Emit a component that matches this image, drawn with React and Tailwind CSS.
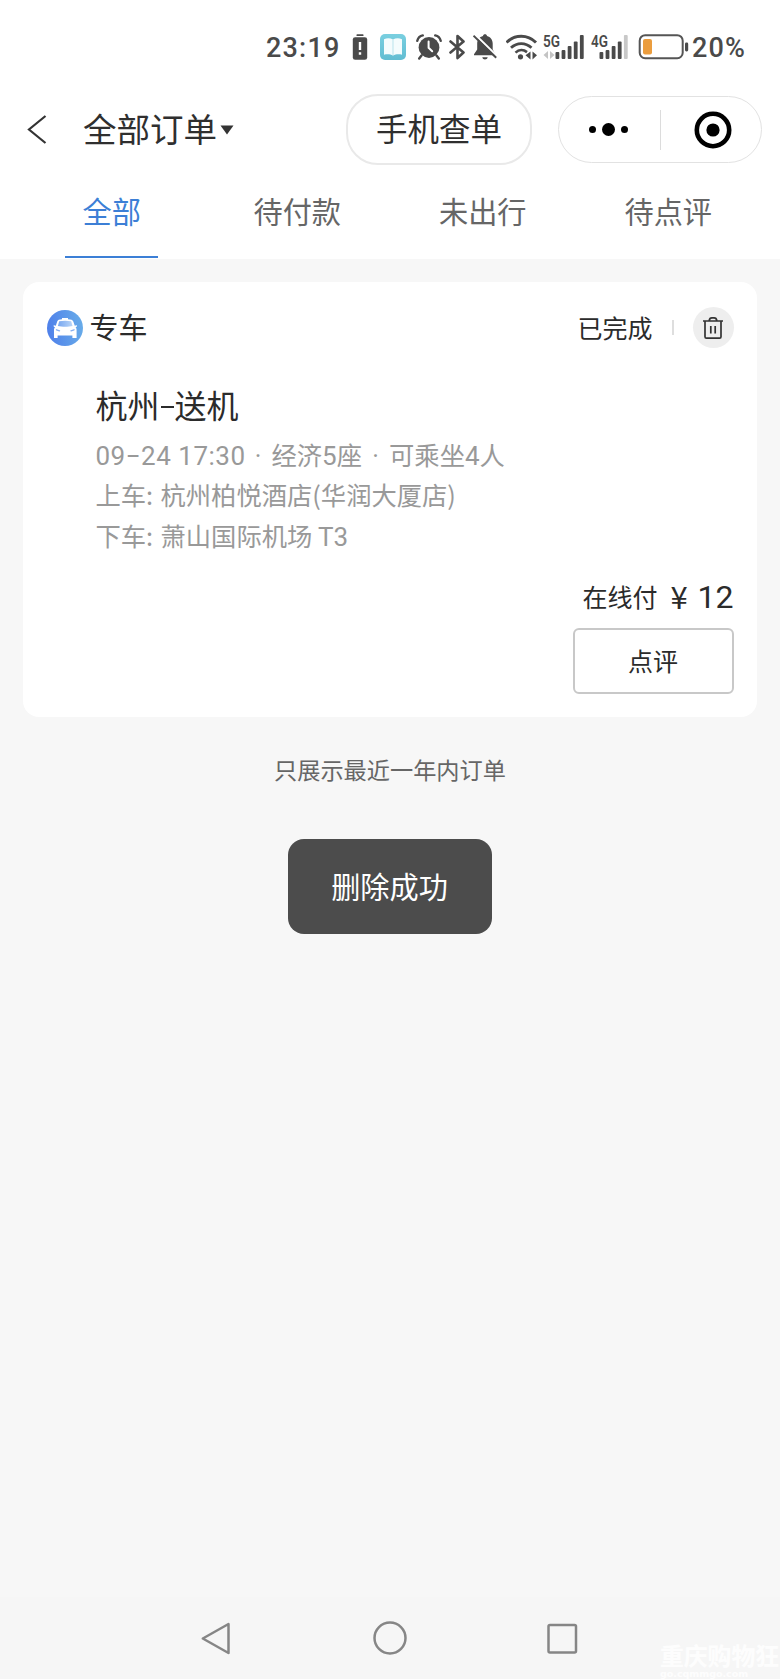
import React, { useState } from "react";

const tabs = ["全部", "待付款", "未出行", "待点评"];

const order = {
  type: "专车",
  status: "已完成",
  title: ["杭州", "送机"],
  from: "杭州柏悦酒店(华润大厦店)",
  price: 12,
};

const SignalBars = ({ label, bars, x, weak }) => (
  <svg className="overflow-visible" width="42" height="26" viewBox="0 0 42 26">
    <text
      x="0"
      y="13"
      fontFamily="Roboto"
      fontWeight="600"
      fontSize="16.5"
      textLength="17"
      lengthAdjust="spacingAndGlyphs"
      fill="#4a4a4a"
    >
      {label}
    </text>
    {weak && (
      <g fill="#c4c4c4">
        <path d="M5 17v8l-4.500-4zM7 17v8l4.500-4z" />
      </g>
    )}
    {[18, 16, 12, 7.5, 1].map((top, i) => (
      <rect
        key={top}
        x={x + i * 6.1}
        y={top}
        width="3.8"
        height={25 - top}
        rx="1"
        fill={i < bars ? "#4a4a4a" : "#c8c8c8"}
      />
    ))}
  </svg>
);

const StatusBar = () => (
  <div className="flex h-[94px] items-start pt-[34px] pl-[266px] text-[#4a4a4a]">
    <span className="w-[86px] pt-px font-[Roboto] text-[27px] leading-[27px] font-medium tracking-[1.200px]">
      23:19
    </span>
    {/* battery warning */}
    <svg className="mr-3" width="16" height="26" viewBox="0 0 16 26">
      <rect x="4.5" y="0.3" width="7" height="1.8" rx="0.6" fill="#4a4a4a" />
      <rect x="0.8" y="3.2" width="14.4" height="22.6" rx="2.4" fill="#4a4a4a" />
      <path d="M8 8v8M8 18.200v2.600" stroke="#fff" strokeWidth="2.400" />
    </svg>
    {/* reader app */}
    <svg className="mr-[10px]" width="26" height="26" viewBox="0 0 26 26">
      <defs>
        <linearGradient id="reader" x1="0" y1="0" x2="0" y2="1">
          <stop offset="0" stopColor="#79cfe0" />
          <stop offset="1" stopColor="#62bdd2" />
        </linearGradient>
      </defs>
      <rect width="26" height="26" rx="5" fill="url(#reader)" />
      <path
        d="M4 5.200c3-1.400 6.500-1.200 9 .3 2.500-1.500 6-1.700 9-.3v15.600c-3-.8-6.500-.6-9 .8-2.500-1.400-6-1.600-9-.8z"
        fill="#f4fcfd"
      />
      <path d="M13 5.500v16" stroke="#b9e3ec" strokeWidth="1" />
    </svg>
    {/* alarm */}
    <svg className="mr-[7px]" width="26" height="26" viewBox="0 0 26 26">
      <circle cx="13" cy="13.500" r="10.400" fill="#4a4a4a" />
      <path
        d="M1.300 6.800C2 4 4 2 6.800 1.400M24.700 6.800C24 4 22 2 19.200 1.400M5.500 21.500l-2.300 3M20.500 21.500l2.300 3"
        stroke="#4a4a4a"
        strokeWidth="2.400"
        strokeLinecap="round"
        fill="none"
      />
      <path
        d="M12.600 7.500v6.300l3.600 3.400"
        stroke="#fff"
        strokeWidth="2"
        fill="none"
        strokeLinecap="round"
      />
    </svg>
    {/* bluetooth */}
    <svg className="mr-[7px]" width="17" height="26" viewBox="0 0 17 26">
      <path
        d="M1.500 7.500L14.500 18.500 8.500 24V2l6 5.500L1.500 18.500"
        stroke="#4a4a4a"
        strokeWidth="2.600"
        strokeLinejoin="round"
        strokeLinecap="round"
        fill="none"
      />
    </svg>
    {/* muted bell */}
    <svg className="mr-[8px]" width="25" height="26" viewBox="0 0 25 26">
      <path
        d="M12 .3c1.100 0 1.900.7 2 1.600 3.500.9 5.700 3.800 5.700 7.500v6l2.700 4.800v1H1v-1l3.200-4.800v-6c0-3.700 2.300-6.600 5.800-7.500.1-.9.900-1.600 2-1.600z"
        fill="#4a4a4a"
      />
      <path d="M9.300 23.300h5.400c-.4 3-5 3-5.400 0z" fill="#4a4a4a" />
      <path d="M2 .5l23 22.500" stroke="#fff" strokeWidth="2.200" />
      <path d="M.5 1.700l22.700 22" stroke="#4a4a4a" strokeWidth="2" />
    </svg>
    {/* wifi */}
    <svg className="mr-[5px]" width="32" height="26" viewBox="0 0 32 26">
      <g stroke="#4a4a4a" fill="none">
        <path d="M.5 8.500c8.500-8.300 21-8.300 29.500 0" strokeWidth="3" />
        <path d="M5 13.800c6-5.600 14.500-5.600 20.500 0" strokeWidth="2.800" />
        <path d="M9.500 18.600c3.500-3.200 8-3.200 11.500-.5" strokeWidth="2.600" />
      </g>
      <circle cx="14.500" cy="22.800" r="2.600" fill="#4a4a4a" />
      <path d="M24.500 17.500v8l-5-4.200zM26.500 17.500v8l4.500-4.200z" fill="#4a4a4a" />
    </svg>
    <div className="mr-[6px]">
      <SignalBars label="5G" bars={5} x={12.5} weak />
    </div>
    <div className="mr-[5px]">
      <SignalBars label="4G" bars={4} x={8.5} />
    </div>
    <svg className="mr-[3px]" width="51" height="26" viewBox="0 0 51 26">
      <rect
        x="1.7"
        y="1.2"
        width="43"
        height="23"
        rx="5.5"
        stroke="#555"
        strokeWidth="2"
        fill="#fff"
      />
      <rect x="5" y="5" width="9" height="15.5" rx="2" fill="#eb9d3e" />
      <rect x="47" y="8.5" width="3.2" height="9" rx="1.4" fill="#4a4a4a" />
    </svg>
    <span className="pt-px font-[Roboto] text-[27px] leading-[27px] font-medium tracking-[1.200px]">
      20%
    </span>
  </div>
);

const Header = () => (
  <div className="flex h-[71px] items-center">
    <svg className="ml-[26px]" width="22" height="32" viewBox="0 0 22 32">
      <path
        d="M19.500 2L3 15.500 19.500 29"
        stroke="#333"
        strokeWidth="2.200"
        fill="none"
      />
    </svg>
    <div className="ml-[35px] flex w-[263px] items-center text-[33.500px] leading-none text-[#2f2f2f]">
      <span className="pb-1">全部订单</span>
      <svg className="ml-[3px]" width="14" height="10" viewBox="0 0 14 10">
        <path d="M.5.500h13L7 9.500z" fill="#333" />
      </svg>
    </div>
    <button
      type="button"
      className="h-[71px] w-[186px] rounded-[32px] border-2 border-[#e9e9e9] pb-1 text-[31.500px] leading-none text-[#2f2f2f]"
    >
      手机查单
    </button>
    <div className="ml-[26px] flex h-[67px] w-[204px] items-center rounded-full border border-[#e2e2e2]">
      <div className="flex w-[101px] items-center justify-center gap-[6px] pr-[3px]">
        <i className="size-[7px] rounded-full bg-black" />
        <i className="size-[13px] rounded-full bg-black" />
        <i className="size-[7px] rounded-full bg-black" />
      </div>
      <div className="h-10 w-px bg-[#dcdcdc]" />
      <div className="flex flex-1 justify-center pl-[3px]">
        <svg width="38" height="38" viewBox="0 0 38 38">
          <circle
            cx="19"
            cy="19"
            r="16.2"
            stroke="#000"
            strokeWidth="4.6"
            fill="none"
          />
          <circle cx="19" cy="19" r="6.6" />
        </svg>
      </div>
    </div>
  </div>
);

const CarIcon = () => (
  <svg width="36" height="36" viewBox="0 0 36 36">
    <defs>
      <linearGradient id="car" x1="0" y1="0.5" x2="1" y2="0.4">
        <stop offset="0" stopColor="#4f80ea" />
        <stop offset="1" stopColor="#68ace9" />
      </linearGradient>
      <linearGradient id="glass" x1="0" y1="0" x2="1" y2="0">
        <stop offset="0" stopColor="#78a7f0" />
        <stop offset="1" stopColor="#b9d5f7" />
      </linearGradient>
    </defs>
    <circle cx="18" cy="18" r="18" fill="url(#car)" />
    <path
      d="M15 8h6v1.200c3 .1 4.700.7 5.300 2.300l1.500 4.200 1.700-.4c.9 0 .9 1.600-.9 2 .9 1 1 2 1 3.200V28h-4.200v-2.500H10.600V28H7V20.500c0-1.200.1-2.200 1-3.200-1.800-.4-1.800-2-.9-2l1.700.4 1.400-4.200c.6-1.600 2-2.200 4.800-2.300z"
      fill="#fff"
    />
    <path
      d="M12.200 11.300c3.500-.8 8.500-.8 12 0l1.300 4.700c-4 1.100-10.500 1.100-14.600 0z"
      fill="url(#glass)"
    />
    <path
      d="M9.500 19.800l3 1M27 19.800l-3 1"
      stroke="#86aff0"
      strokeWidth="1.4"
      strokeLinecap="round"
    />
  </svg>
);

const TrashIcon = () => (
  <svg
    width="22"
    height="24"
    viewBox="0 0 22 24"
    stroke="#333"
    strokeWidth="1.7"
    fill="none"
  >
    <path d="M1 5h20M7.200 4.500c.3-2 1.300-2.700 2.600-2.700h2.400c1.300 0 2.300.7 2.600 2.700M3 5v15.700c0 .9.500 1.500 1.400 1.500h13.200c.9 0 1.400-.6 1.400-1.500V5M8.800 10v7.500M13.200 10v7.500" />
  </svg>
);

const Latin = ({ children, className = "" }) => (
  <span className={`font-[Roboto] text-[26px] ${className}`}>{children}</span>
);

const Dot = () => (
  <span className="inline-block w-[27px] text-center font-[Roboto]">·</span>
);

const OrderCard = () => (
  <div className="mt-[23px] ml-[23px] h-[435px] w-[733.500px] rounded-[16px] bg-white pr-[23px] pl-[23.500px]">
    <div className="flex h-[91px] items-center text-[#2b2b2b]">
      <CarIcon />
      <span className="ml-[7px] pb-[3px] text-[29px] leading-none">
        {order.type}
      </span>
      <span className="ml-auto pb-px text-[25px] leading-none">
        {order.status}
      </span>
      <i className="ml-[19px] h-[15px] w-[2px] bg-[#dedede]" />
      <button
        type="button"
        className="ml-[19px] flex size-[41px] items-center justify-center rounded-full bg-[#eeeeee]"
      >
        <TrashIcon />
      </button>
    </div>

    <div className="pt-[9px] pl-[49px]">
      <h2 className="flex h-[44px] items-center text-[32px] leading-none text-[#2b2b2b]">
        {order.title[0]}
        <i className="mx-[1px] mt-[5px] h-[2px] w-[13px] bg-[#2b2b2b]" />
        {order.title[1]}
      </h2>
      <div className="mt-[8px] text-[25.300px] leading-[40.300px] whitespace-pre text-[#999]">
        <p className="h-[40.300px]">
          <Latin className="inline-block w-[149px] tracking-[0.500px]">
            09−24 17:30
          </Latin>
          <Dot />
          经济<Latin>5</Latin>座
          <Dot />
          可乘坐<Latin>4</Latin>人
        </p>
        <p className="h-[40.300px]">
          <span className="inline-block w-[65px]">上车:</span>
          {order.from}
        </p>
        <p className="h-[40.300px]">
          <span className="inline-block w-[65px]">下车:</span>
          萧山国际机场 <Latin>T3</Latin>
        </p>
      </div>
    </div>

    <div className="mt-[20px] flex h-[44px] items-center justify-end text-[#2b2b2b]">
      <span className="text-[25px] leading-none">在线付</span>
      <span className="w-[40px] pb-[3px] pl-[13px] text-[31px] leading-none">
        ¥
      </span>
      <span className="font-[Roboto] text-[32px] leading-none">
        {order.price}
      </span>
    </div>
    <button
      type="button"
      className="mt-[9px] ml-auto block h-[66px] w-[161px] rounded-[6px] border-2 border-[#c8c8c8] text-[25px] leading-none text-[#2b2b2b]"
    >
      点评
    </button>
  </div>
);

const NavBar = () => (
  <div className="mt-auto flex h-[82px] justify-between bg-[#f6f6f6] pt-[22px] pr-[200px] pl-[200px]">
    <svg width="34" height="38" viewBox="0 0 34 38">
      <path
        d="M2.800 19.500L28.500 5v29z"
        stroke="#868686"
        strokeWidth="2.5"
        strokeLinejoin="round"
        fill="none"
      />
    </svg>
    <svg width="38" height="38" viewBox="0 0 38 38">
      <circle
        cx="19"
        cy="19"
        r="15.5"
        stroke="#868686"
        strokeWidth="2.5"
        fill="none"
      />
    </svg>
    <svg width="34" height="38" viewBox="0 0 34 38">
      <rect
        x="2.5"
        y="6"
        width="27.5"
        height="27.5"
        rx="1.5"
        stroke="#868686"
        strokeWidth="2.5"
        fill="none"
      />
    </svg>
  </div>
);

const App = () => {
  const [active, setActive] = useState(0);

  return (
    <div className="relative flex h-[1679px] w-[780px] flex-col overflow-hidden bg-[#f7f7f7] font-['Noto_Sans_CJK_SC',sans-serif]">
      <div className="h-[259px] bg-white">
        <StatusBar />
        <Header />
        <div className="flex h-[94px] px-[19px]">
          {tabs.map((tab, i) => (
            <button
              type="button"
              key={tab}
              onClick={() => setActive(i)}
              className={`flex flex-1 flex-col items-center justify-between pt-[31px] pb-px text-[29.200px] leading-none ${
                i === active ? "text-[#3c7fd6]" : "text-[#666]"
              }`}
            >
              {tab}
              {i === active && <i className="h-[2px] w-[93px] bg-[#3c7fd6]" />}
            </button>
          ))}
        </div>
      </div>

      <OrderCard />

      <p className="mt-[39px] text-center text-[23.200px] leading-[26px] text-[#666]">
        只展示最近一年内订单
      </p>

      <div className="mx-auto mt-[57px] flex h-[95px] w-[204px] items-center justify-center rounded-[16px] bg-[#4c4c4c] pr-px pb-[2px] text-[29.200px] leading-none text-white">
        删除成功
      </div>

      <NavBar />

      <div className="absolute top-[1642px] left-[660px] whitespace-nowrap text-white/80">
        <p className="text-[23.800px] leading-[26px] font-bold">重庆购物狂</p>
        <p className="font-['DejaVu_Sans'] text-[9.500px] leading-[11px] font-bold">
          go.cqmmgo.com
        </p>
      </div>
    </div>
  );
};

export default App;
